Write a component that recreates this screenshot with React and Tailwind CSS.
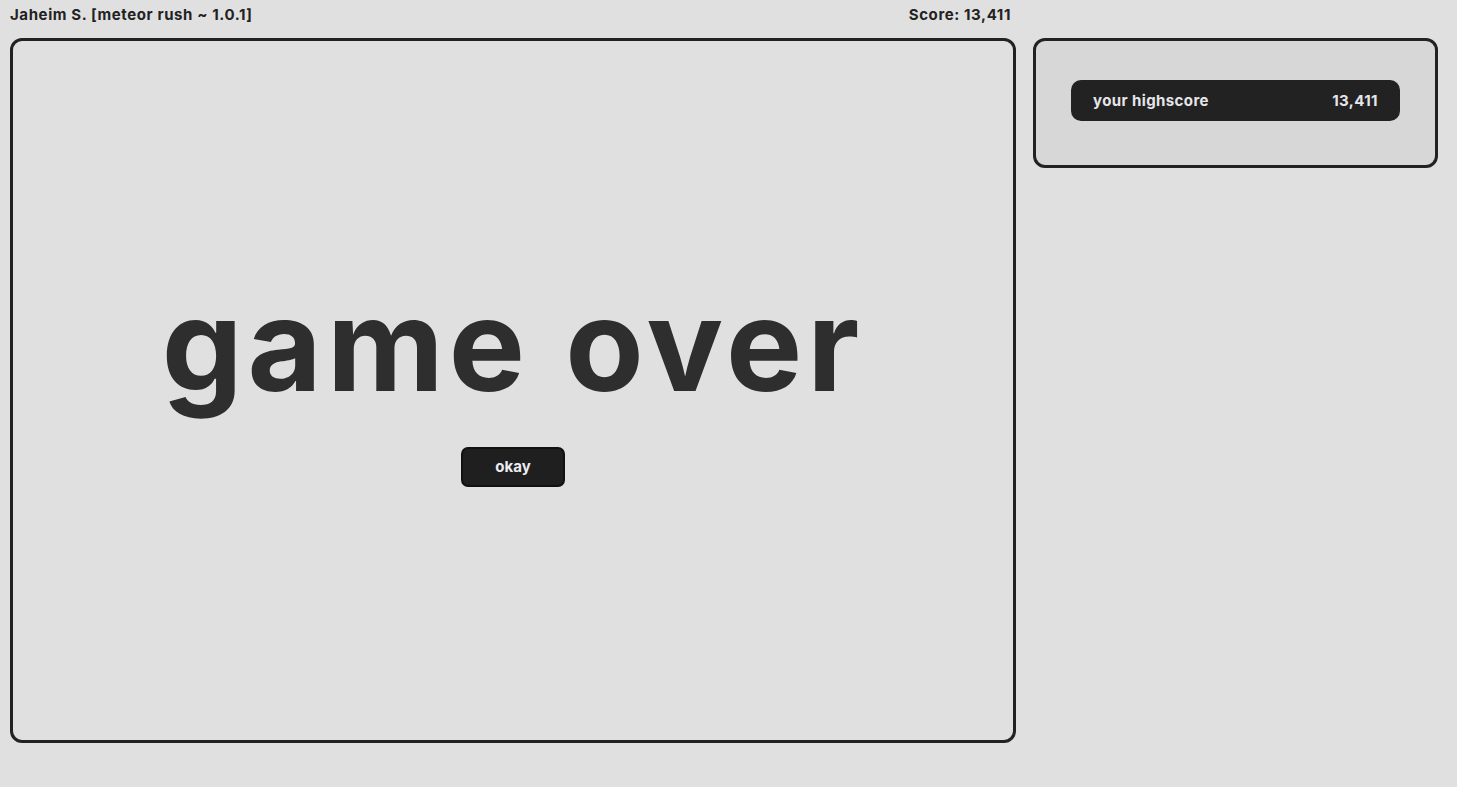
import React from "react";

export default function App() {
    const score = 13411;
    const highscore = 13411;

    return (
        <div className="min-h-screen w-full bg-[#e0e0e0] text-[#222] font-['Inter',sans-serif] flex gap-[17px] pl-[10px] pr-[19px]">
            {/* game column */}
            <div className="w-[1006px] flex flex-col">
                <div className="h-[38px] flex justify-between items-start pt-[5px] text-[15px] font-bold leading-[20px] tracking-[0.6px]">
                    <span>Jaheim S. [meteor rush ~ 1.0.1]</span>
                    <span className="pr-[5px]">Score: {score.toLocaleString("en-US")}</span>
                </div>
                <div className="h-[705px] border-[3px] border-[#222] rounded-[12px] flex flex-col items-center justify-center">
                    <h1 className="text-[128px] font-bold leading-[140px] text-[#2e2e2e] tracking-[5px] mt-[-20px]">
                        game over
                    </h1>
                    <button className="mt-[32px] w-[104px] h-[40px] bg-[#1f1f1f] border-2 border-[#111] rounded-[7px] text-[15px] font-bold text-[#ececf2] pt-[1px]">
                        okay
                    </button>
                </div>
            </div>

            {/* side panel */}
            <div className="flex-1 pt-[38px]">
                <div className="h-[130px] bg-[#d7d7d7] border-[3px] border-[#222] rounded-[12px] pt-[39px] px-[35px]">
                    <div className="h-[41px] bg-[#222] rounded-[10px] flex items-center justify-between px-[22px] pt-[2px] text-[15px] font-bold text-[#e6e6ea] tracking-[0.4px]">
                        <span>your highscore</span>
                        <span>{highscore.toLocaleString("en-US")}</span>
                    </div>
                </div>
            </div>
        </div>
    );
}
